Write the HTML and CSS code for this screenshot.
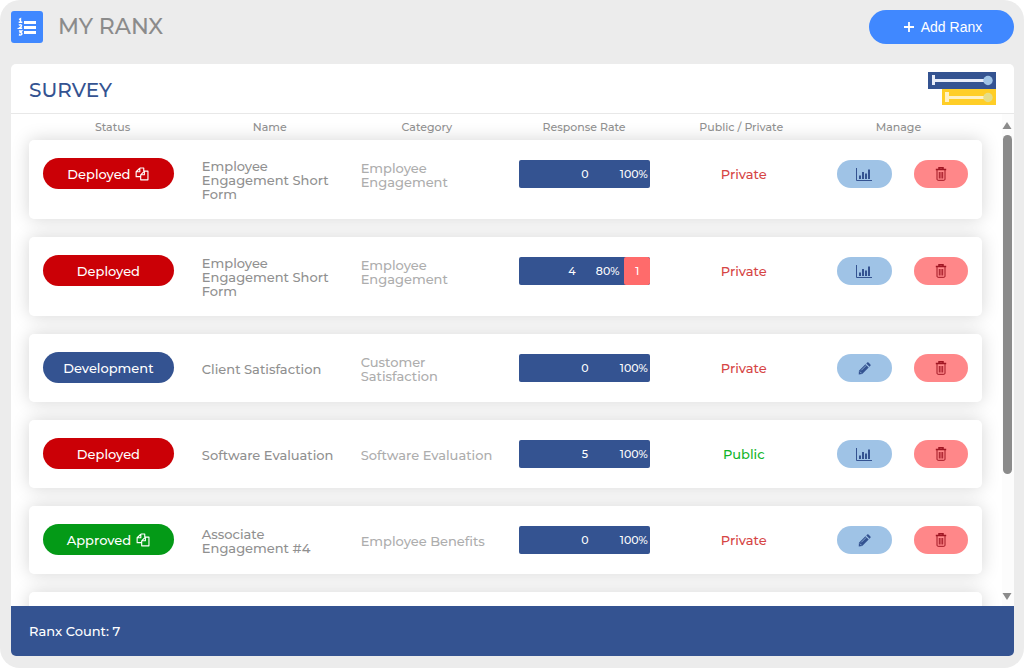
FILE: index.html
```html
<!DOCTYPE html>
<html lang="en">
<head>
<meta charset="utf-8">
<meta name="viewport" content="width=device-width, initial-scale=1">
<title>My Ranx</title>
<link rel="stylesheet" href="styles.css">
</head>
<body>
<svg class="symbols" aria-hidden="true">
  <symbol id="copy" viewBox="0 0 16 16"><path d="M5.500 1.200h4.500v3.500M5.500 1.200 1.300 5.400v5.600h4.700M1.300 5.400h4.200V1.200M10.700 4.700h4.100v10H6.500V8.900zM6.500 8.900h4.200V4.700" fill="none" stroke="currentColor" stroke-width="1.300" stroke-linejoin="round"/></symbol>
  <symbol id="chart" viewBox="0 0 16 13"><path d="M.5 0v12.500H16" fill="none" stroke="currentColor" stroke-width="1"/><path d="M3 7.500h2V11H3zM6 4h2v7H6zM9 5.500h2V11H9zM12 1.500h2V11h-2z" fill="currentColor"/></symbol>
  <symbol id="trash" viewBox="0 0 12 14"><path d="M4 2V.8h4V2M.8 2.500h10.400" fill="none" stroke="currentColor" stroke-width="1.500"/><path d="M2 3v9.200q0 1.100 1.100 1.100h5.800q1.100 0 1.100-1.100V3M4.300 5v6.500M6 5v6.500M7.700 5v6.500" fill="none" stroke="currentColor" stroke-width="1"/></symbol>
  <symbol id="pencil" viewBox="0 0 14 14"><path d="m1 9.500 7-7L11.500 6l-7 7L.8 13.400zM8.900 1.600l1-1q.7-.6 1.400 0l2.100 2.100q.6.700 0 1.400l-1 1z" fill="currentColor"/><path d="m2 10.300 1.900 1.900M3.500 9 9 3.500" stroke="#9fc3e6" stroke-width=".8"/></symbol>
</svg>
<div class="shell">
  <header class="topbar">
    <span class="logo">
      <svg viewBox="0 0 32 32" width="32" height="32" aria-hidden="true">
        <path d="M13 11.500h12M13 16.500h12M13 21.500h12" stroke="#fff" stroke-width="2.800"/>
        <path d="M8 8.500 9.500 7.700V11M7.700 11.300h3.600M7.800 14.200q1.700-1 2.700 0 .5 1-2.500 3.100h3.200M7.900 20h2.900l-1.500 1.600q1.700 0 1.600 1.200-.2 1.600-3 1" fill="none" stroke="#fff" stroke-width="1.400"/>
      </svg>
    </span>
    <h1 class="title">MY RANX</h1>
    <button class="add" type="button">
      <svg viewBox="0 0 10 10" width="10" height="10" aria-hidden="true"><path d="M5 0v10M0 5h10" stroke="#fff" stroke-width="1.800"/></svg>
      Add Ranx
    </button>
  </header>
  <main class="panel">
    <div class="panel-head">
      <h2 class="panel-title">SURVEY</h2>
      <svg class="gauge" viewBox="0 0 70 35" width="70" height="35" aria-hidden="true">
        <path d="M1 1h68v17H1z" fill="#345391"/><path d="M5 4h3v10H5zM8 8h53v3H8z" fill="#e9edf8"/><circle cx="61" cy="9.500" r="4.700" fill="#9fc3e6"/>
        <path d="M15 18h54v16H15z" fill="#ffce27"/><path d="M18 21h4v10h-4zM22 25h39v3H22z" fill="#fff1c4"/><circle cx="61" cy="26.500" r="4.700" fill="#e5dd88"/>
      </svg>
    </div>
    <div class="scroll-area">
      <div class="viewport">
        <table class="list">
          <thead><tr class="columns"><th>Status</th><th>Name</th><th>Category</th><th>Response Rate</th><th>Public / Private</th><th>Manage</th></tr></thead>
          <tbody class="cards">
            <tr class="card">
              <td class="cell"><button class="status deployed" type="button">Deployed <svg class="copy"><use href="#copy"/></svg></button></td>
              <td class="cell name">Employee Engagement Short Form</td><td class="cell category">Employee Engagement</td>
              <td class="cell"><div class="bar"><span class="done"><span class="count">0</span><span class="percent">100%</span></span></div></td>
              <td class="cell access private">Private</td>
              <td class="cell actions"><button class="action report" type="button" aria-label="Report"><svg class="chart"><use href="#chart"/></svg></button><button class="action delete" type="button" aria-label="Delete"><svg class="trash"><use href="#trash"/></svg></button></td>
            </tr>
            <tr class="card">
              <td class="cell"><button class="status deployed" type="button">Deployed</button></td>
              <td class="cell name">Employee Engagement Short Form</td><td class="cell category">Employee Engagement</td>
              <td class="cell"><div class="bar"><span class="done"><span class="count">4</span><span class="percent">80%</span></span><span class="open" style="width: 20%">1</span></div></td>
              <td class="cell access private">Private</td>
              <td class="cell actions"><button class="action report" type="button" aria-label="Report"><svg class="chart"><use href="#chart"/></svg></button><button class="action delete" type="button" aria-label="Delete"><svg class="trash"><use href="#trash"/></svg></button></td>
            </tr>
            <tr class="card">
              <td class="cell"><button class="status development" type="button">Development</button></td>
              <td class="cell name">Client Satisfaction</td><td class="cell category">Customer Satisfaction</td>
              <td class="cell"><div class="bar"><span class="done"><span class="count">0</span><span class="percent">100%</span></span></div></td>
              <td class="cell access private">Private</td>
              <td class="cell actions"><button class="action report" type="button" aria-label="Edit"><svg class="pencil"><use href="#pencil"/></svg></button><button class="action delete" type="button" aria-label="Delete"><svg class="trash"><use href="#trash"/></svg></button></td>
            </tr>
            <tr class="card">
              <td class="cell"><button class="status deployed" type="button">Deployed</button></td>
              <td class="cell name">Software Evaluation</td><td class="cell category">Software Evaluation</td>
              <td class="cell"><div class="bar"><span class="done"><span class="count">5</span><span class="percent">100%</span></span></div></td>
              <td class="cell access public">Public</td>
              <td class="cell actions"><button class="action report" type="button" aria-label="Report"><svg class="chart"><use href="#chart"/></svg></button><button class="action delete" type="button" aria-label="Delete"><svg class="trash"><use href="#trash"/></svg></button></td>
            </tr>
            <tr class="card">
              <td class="cell"><button class="status approved" type="button">Approved <svg class="copy"><use href="#copy"/></svg></button></td>
              <td class="cell name">Associate Engagement #4</td><td class="cell category">Employee Benefits</td>
              <td class="cell"><div class="bar"><span class="done"><span class="count">0</span><span class="percent">100%</span></span></div></td>
              <td class="cell access private">Private</td>
              <td class="cell actions"><button class="action report" type="button" aria-label="Edit"><svg class="pencil"><use href="#pencil"/></svg></button><button class="action delete" type="button" aria-label="Delete"><svg class="trash"><use href="#trash"/></svg></button></td>
            </tr>
            <tr class="card"><td class="cell"></td></tr>
          </tbody>
        </table>
      </div>
      <div class="scrollbar" aria-hidden="true">
        <svg viewBox="0 0 10 7" width="10" height="7"><path d="M5 0 9.500 7H.5z" fill="#8b8b8b"/></svg>
        <div class="track"><div class="thumb"></div></div>
        <svg viewBox="0 0 10 7" width="10" height="7"><path d="M5 7 9.500 0H.5z" fill="#8b8b8b"/></svg>
      </div>
    </div>
    <footer class="panel-foot">Ranx Count: 7</footer>
  </main>
</div>
</body>
</html>
```
FILE: styles.css
```css
* { box-sizing: border-box; }
body { margin: 0; background: #fff; font-family: Montserrat, Inter, sans-serif; font-weight: 500; }
button { border: 0; padding: 0; font: inherit; color: #fff; cursor: pointer; }
.symbols { display: none; }
.shell { display: flex; flex-direction: column; gap: 20px; height: 100vh; padding: 10px 10px 12px 11px; border-radius: 20px; background: #ececec; }
.topbar { display: flex; align-items: center; height: 34px; }
.logo { display: flex; border-radius: 3px; background: #4088ff; }
.title { margin: 0 auto 0 15px; font-size: 22px; font-weight: 500; line-height: 32px; color: #8b8b8b; }
.add { display: flex; align-items: center; justify-content: center; gap: 7px; width: 145px; height: 34px; padding-left: 3px; border-radius: 17px; background: #4088ff; font: 14px "Liberation Sans", Arial, sans-serif; }
.panel { display: flex; flex: 1; flex-direction: column; min-height: 0; overflow: hidden; border-radius: 5px; background: #fff; }
.panel-head { display: flex; align-items: center; justify-content: space-between; height: 50px; padding: 0 17px 0 18px; border-bottom: 1px solid #e8e8e8; }
.panel-title { margin: 0; padding-top: 2px; font-size: 20px; font-weight: 500; color: #345391; }
.scroll-area { display: flex; flex: 1; min-height: 0; }
.viewport { flex: 1; overflow: hidden; padding: 0 20px 0 18px; }
.list, .list thead, .cards { display: block; }
.columns { display: grid; grid-template-columns: repeat(6, 1fr); padding: 0 5px; }
.columns th { position: relative; z-index: 1; padding: 0; font-size: 11px; font-weight: 500; line-height: 26px; text-align: center; color: #8f8f8f; }
.cards { display: flex; flex-direction: column; gap: 18px; }
.card { display: grid; grid-template-columns: repeat(6, 1fr); min-height: 68px; padding: 17px 0; border-radius: 5px; background: #fff; box-shadow: 0 0 18px rgba(0, 0, 0, 0.17); }
.cell { min-width: 0; padding: 0 14px; font-size: 13px; }
.name, .category { display: flex; align-items: center; align-self: start; min-height: 34px; padding: 2px 4px 1px 14px; line-height: 14px; color: #909090; }
.category { color: #adadad; }
.status { display: flex; align-items: center; justify-content: center; gap: 5px; width: 100%; height: 31px; margin-top: 1px; border-radius: 16px; font-size: 13px; }
.deployed { background: #cb0006; }
.development { background: #345391; }
.approved { background: #049a17; }
.copy { width: 14px; height: 14px; }
.bar { display: flex; height: 28px; margin-top: 3px; overflow: hidden; border-radius: 2px; background: #345391; font-size: 11px; line-height: 28px; color: #fff; }
.done { display: grid; flex: 1; grid-template-columns: 33px 1fr 33px; text-align: center; }
.count { grid-column: 2; }
.open { border-radius: 2px; background: #ff6b6b; text-align: center; }
.access { line-height: 34px; text-align: center; }
.private { color: #d64545; }
.public { color: #10b52a; }
.actions { display: flex; gap: 22px; align-items: flex-start; }
.action { display: flex; flex: 1; align-items: center; justify-content: center; height: 28px; margin-top: 3px; border-radius: 14px; }
.report { background: #9fc3e6; color: #345391; }
.delete { background: #ff8789; color: #a01623; }
.chart { width: 16px; height: 13px; }
.trash { width: 12px; height: 14px; }
.pencil { width: 13px; height: 13px; }
.scrollbar { display: flex; flex-direction: column; align-items: center; gap: 6px; width: 12px; padding: 8px 2px 6px 0; background: #fcfcfc; }
.track { flex: 1; width: 9px; }
.thumb { height: 75%; border-radius: 5px; background: #8b8b8b; }
.panel-foot { padding: 0 18px; font-size: 13px; line-height: 50px; background: #345391; color: #fff; }
```
